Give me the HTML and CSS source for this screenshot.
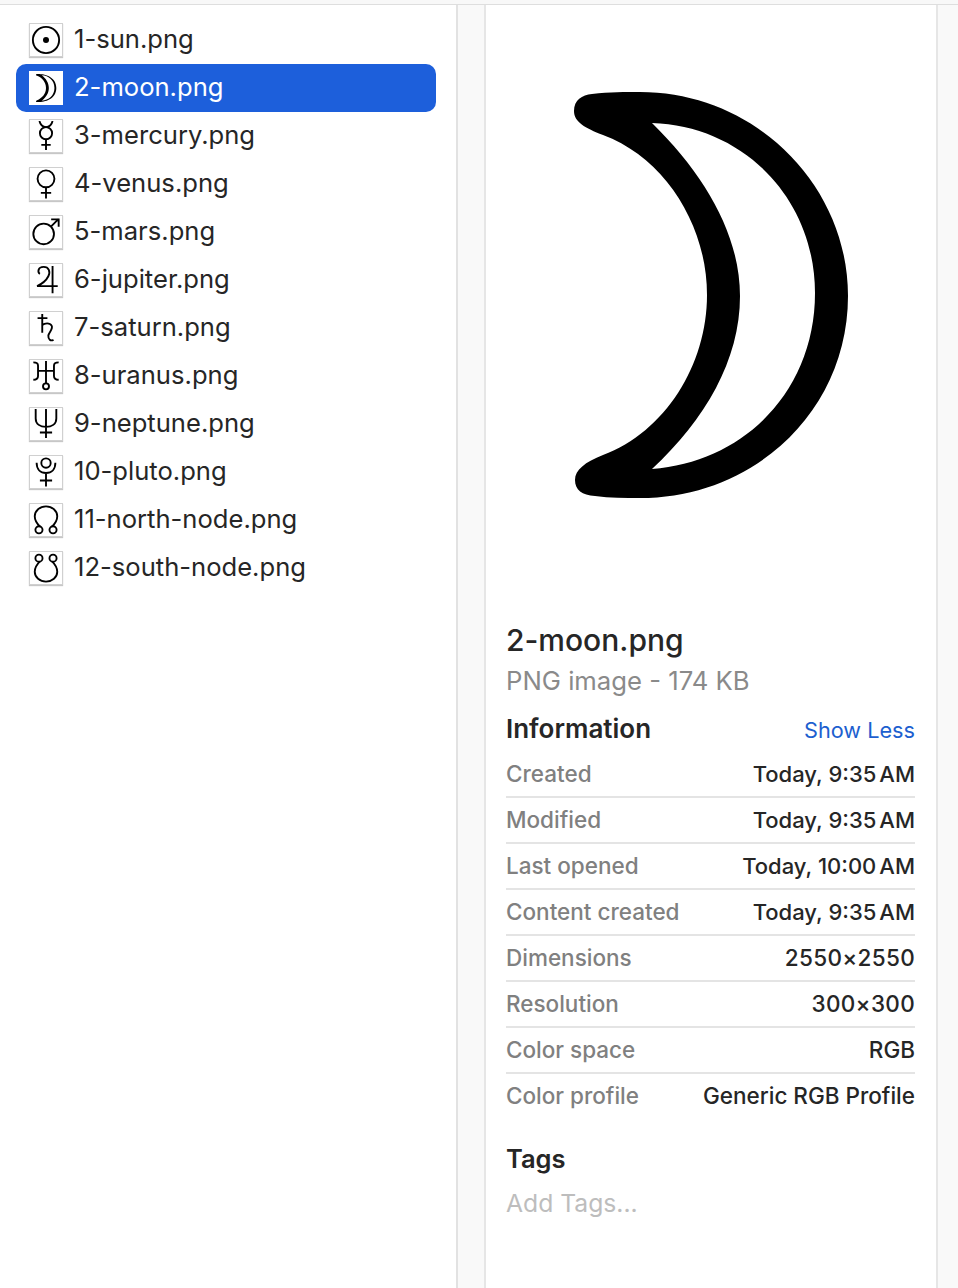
FILE: index.html
```html
<!DOCTYPE html>
<html lang="en">
<head>
<meta charset="utf-8">
<title>Finder</title>
<link rel="stylesheet" href="styles.css">
</head>
<body>
<div class="window">
  <ul class="list">
    <li class="row"><span class="thumb"><svg viewBox="0 0 32 32"><circle cx="16" cy="16" r="14"/><circle class="dot" cx="16" cy="16" r="3.200"/></svg></span><span class="name">1-sun.png</span></li>
    <li class="row selected"><span class="thumb"><svg viewBox="0 0 32 32"><path class="solid" fill-rule="evenodd" d="M6 1C13 .6 27 3 27 16S13 31.400 6 31C5 30.500 5 29.500 6.500 29C11.500 27 16 22.500 16 16S11.500 5 6.500 3C5 2.500 5 1.500 6 1ZM11.500 2.500C16 6 19 10.500 19 16S16 26 11.500 29.500C19 29 25 24 25 16S19 3 11.500 2.500Z"/></svg></span><span class="name">2-moon.png</span></li>
    <li class="row"><span class="thumb"><svg viewBox="0 0 32 32"><path d="M9 0C10 4 13 6.500 16 6.500S22 4 23 0"/><circle cx="16" cy="13" r="6.500"/><path d="M16 19.500V31M11 25.500H21"/></svg></span><span class="name">3-mercury.png</span></li>
    <li class="row"><span class="thumb"><svg viewBox="0 0 32 32"><circle cx="16" cy="10.500" r="9"/><path d="M16 19.500V31.500M10.500 25.500H21.500"/></svg></span><span class="name">4-venus.png</span></li>
    <li class="row"><span class="thumb"><svg viewBox="0 0 32 32"><circle cx="13.500" cy="18" r="11"/><path d="M21.500 10L29.500 2M21.500 2.500H29.500V10.500"/></svg></span><span class="name">5-mars.png</span></li>
    <li class="row"><span class="thumb"><svg viewBox="0 0 32 32"><path d="M9.500 9.500C7 8 7 2 13.500 2C19 2 21 7 18.500 12C16 17 12 20 6.500 22.500H28.500M23 1V30"/></svg></span><span class="name">6-jupiter.png</span></li>
    <li class="row"><span class="thumb"><svg viewBox="0 0 32 32"><path d="M12 1V21M7 5.500H17.500M12 13C14.500 10.500 20 10 22 13.500C24 17 19 20.500 18.500 24C18.200 28 21 30.500 24 28.500"/></svg></span><span class="name">7-saturn.png</span></li>
    <li class="row"><span class="thumb"><svg viewBox="0 0 32 32"><path d="M2.500 1.500C6 1.500 7.500 2.500 7.500 5V16C7.500 18.500 6 20 2.500 20M29.500 1.500C26 1.500 24.500 2.500 24.500 5V16C24.500 18.500 26 20 29.500 20M7.500 10.500H24.500M16 0V24"/><circle cx="16" cy="27" r="3.200"/></svg></span><span class="name">8-uranus.png</span></li>
    <li class="row"><span class="thumb"><svg viewBox="0 0 32 32"><path d="M5 0V10C5 16 10 19 16 19S27 16 27 10V0M16 0V31M9.500 25H22.500"/></svg></span><span class="name">9-neptune.png</span></li>
    <li class="row"><span class="thumb"><svg viewBox="0 0 32 32"><circle cx="16" cy="6.500" r="5"/><path d="M6 6C6 13 10 17 16 17S26 13 26 6M16 17V31.500M9.500 25H22.500"/></svg></span><span class="name">10-pluto.png</span></li>
    <li class="row"><span class="thumb"><svg viewBox="0 0 32 32"><path d="M9.500 23C6 19.500 4 16 4 12C4 6 9.500 1.500 16 1.500S28 6 28 12C28 16 26 19.500 22.500 23"/><circle cx="8.500" cy="26.500" r="3.800"/><circle cx="23.500" cy="26.500" r="3.800"/></svg></span><span class="name">11-north-node.png</span></li>
    <li class="row"><span class="thumb"><svg viewBox="0 0 32 32"><path d="M9.500 9C6 12.500 4 16 4 20C4 26 9.500 30.500 16 30.500S28 26 28 20C28 16 26 12.500 22.500 9"/><circle cx="8.500" cy="5.500" r="3.800"/><circle cx="23.500" cy="5.500" r="3.800"/></svg></span><span class="name">12-south-node.png</span></li>
  </ul>
  <div class="gutter"></div>
  <section class="preview">
    <div class="stage">
      <svg class="moon" viewBox="486 5 450 598"><path fill-rule="evenodd" d="M574 111C574 100 582 95 592 94C610 92 625 92 640 92C755 92 848 185 848 296C848 410 755 498 640 498C625 498 610 498 595 496C582 495 575 490 575 480C575 470 585 462 603 455C665 432 707 365 707 295C707 225 665 158 603 135C585 128 574 122 574 111ZM652 123C705 175 740 235 740 296C740 360 705 420 652 469C745 462 815 390 815 293C815 200 745 126 652 123Z"/></svg>
    </div>
    <div class="details">
      <h1 class="title">2-moon.png</h1>
      <p class="kind">PNG image - 174 KB</p>
      <div class="info-head"><h2 class="heading">Information</h2><a class="more">Show Less</a></div>
      <dl class="meta">
        <div class="meta-row"><dt>Created</dt><dd class="time">Today, 9:35<span class="am">AM</span></dd></div>
        <div class="meta-row"><dt>Modified</dt><dd class="time">Today, 9:35<span class="am">AM</span></dd></div>
        <div class="meta-row"><dt>Last opened</dt><dd class="time">Today, 10:00<span class="am">AM</span></dd></div>
        <div class="meta-row"><dt>Content created</dt><dd class="time">Today, 9:35<span class="am">AM</span></dd></div>
        <div class="meta-row"><dt>Dimensions</dt><dd class="num">2550×2550</dd></div>
        <div class="meta-row"><dt>Resolution</dt><dd class="num">300×300</dd></div>
        <div class="meta-row"><dt>Color space</dt><dd>RGB</dd></div>
        <div class="meta-row"><dt>Color profile</dt><dd>Generic RGB Profile</dd></div>
      </dl>
      <h2 class="heading tags">Tags</h2>
      <p class="add-tags">Add Tags...</p>
    </div>
  </section>
  <div class="edge"></div>
</div>
</body>
</html>
```
FILE: styles.css
```css
* { box-sizing: border-box; }
html, body { margin: 0; height: 100%; overflow: hidden; background: #f8f8f8; }
body { font-family: Inter, "Liberation Sans", sans-serif; color: #262626; }
.window { display: flex; height: 1288px; margin-top: 4px; border-top: 1px solid #dedede; background: #fff; }
.list { list-style: none; margin: 0; padding: 11px 20px 0 16px; width: 458px; flex: none; border-right: 2px solid #e2e2e2; }
.row { display: flex; align-items: center; height: 48px; padding-left: 13px; gap: 11px; border-radius: 10px; }
.row.selected { background: #1d5fdb; color: #fff; }
.thumb { width: 34px; height: 34px; margin-bottom: 1px; flex: none; background: #fff; border: 1px solid #d0d0d0; box-shadow: 0 1px 1px rgba(0,0,0,.22); padding: 1px; display: flex; }
.row.selected .thumb { border-color: #fff; box-shadow: none; }
.thumb svg { width: 30px; height: 30px; fill: none; stroke: #000; stroke-width: 2; overflow: hidden; }
.thumb .dot, .thumb .solid { fill: #000; stroke: none; }
.name { font-size: 25.600px; line-height: 48px; position: relative; top: -1px; }
.gutter { width: 28px; flex: none; background: #f9f9f9; border-right: 2px solid #e6e6e6; }
.preview { width: 450px; flex: none; }
.stage { height: 598px; }
.moon { display: block; width: 450px; height: 598px; }
.details { padding: 20px 21px 0 20px; }
.title { margin: 0; font-size: 30px; font-weight: 500; line-height: 34px; }
.kind { margin: 7px 0 0; font-size: 25.700px; line-height: 34px; color: #8a8a8a; }
.info-head { display: flex; justify-content: space-between; align-items: baseline; margin-top: 14px; }
.heading { margin: 0; font-size: 26px; font-weight: 600; line-height: 34px; }
.more { font-size: 21.700px; color: #1d5fcf; }
.meta { margin: 6px 0 0; }
.meta-row { display: flex; justify-content: space-between; align-items: center; height: 46px; padding-bottom: 1px; border-bottom: 2px solid #e4e4e4; font-size: 22.500px; font-weight: 500; }
.meta-row:last-child { border-bottom-color: transparent; }
.meta-row dt { color: #808080; }
.meta-row dd { margin: 0; color: #262626; }
.meta-row .time { font-size: 22px; }
.meta-row .am { margin-left: 3px; }
.meta-row .num { letter-spacing: .3px; }
.tags { margin-top: 22px; font-size: 25.500px; }
.add-tags { margin: 10px 0 0; font-size: 24.700px; line-height: 34px; color: #bdbdbd; }
.edge { flex: 1; background: #f9f9f9; border-left: 2px solid #e6e6e6; }
```
